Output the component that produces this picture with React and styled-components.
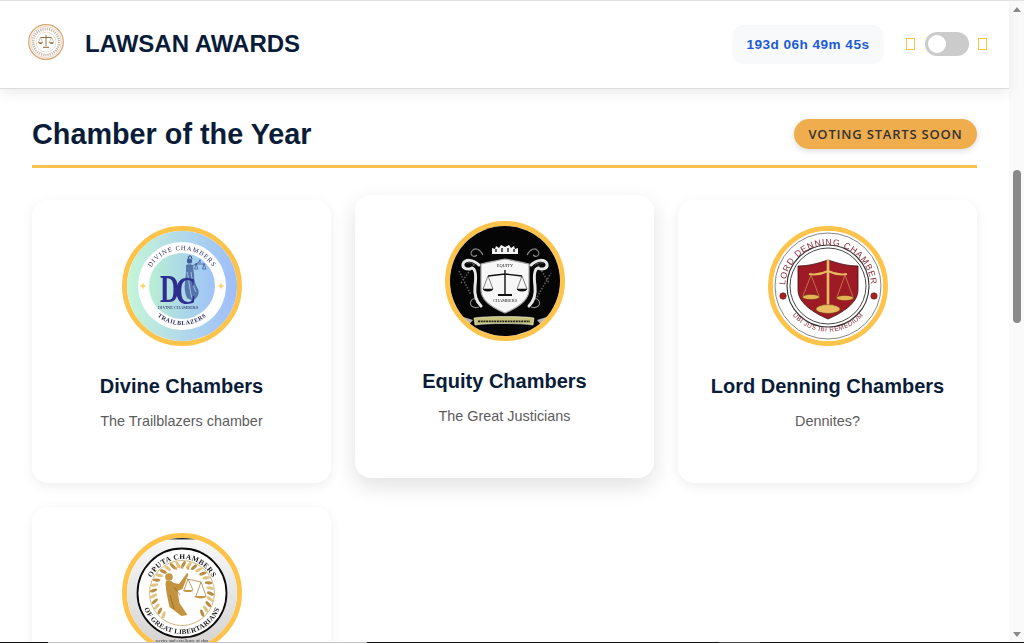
import React from "react";
import styled, { createGlobalStyle } from "styled-components";

const Global = createGlobalStyle`
  html, body { margin: 0; padding: 0; height: 100%; overflow: hidden; background: #fff; }
  body { font-family: "Liberation Sans", Arial, sans-serif; color: #0a1a33; }
  * { box-sizing: border-box; }
`;

const Frame = styled.div`
  position: relative;
  display: flex;
  width: 1024px;
  height: 643px;
  overflow: hidden;
  border-top: 1px solid #e2e2e2;
  background: #fff;
`;
const Page = styled.div`
  flex: 1;
  min-width: 0;
  display: flex;
  flex-direction: column;
`;
const Header = styled.header`
  position: relative;
  z-index: 2;
  height: 88px;
  flex: none;
  display: flex;
  align-items: center;
  padding: 0 22px 2px 28px;
  background: #fff;
  border-bottom: 1px solid #dcdcdc;
  box-shadow: 0 4px 12px rgba(0, 0, 0, 0.08);
`;
const Brand = styled.div`
  display: flex;
  align-items: center;
  gap: 21px;
  flex: 1;
`;
const SealWrap = styled.div`
  flex: none;
  height: 36px;
  margin-bottom: 3px;
  svg { display: block; filter: blur(0.4px); }
`;
const BrandName = styled.h1`
  margin: 0;
  font-size: 24px;
  font-weight: 700;
  color: #0a1c38;
`;
const Timer = styled.div`
  width: 152px;
  height: 39px;
  margin-top: 2px;
  display: flex;
  align-items: center;
  justify-content: center;
  border-radius: 12px;
  background: #f8f9fb;
  color: #1d5bd6;
  font-size: 13.6px;
  font-weight: 700;
  letter-spacing: 0.45px;
`;
const ThemeSwitch = styled.div`
  display: flex;
  align-items: center;
  gap: 10px;
  margin-left: 22px;
`;
const Tofu = styled.span`
  width: 9px;
  height: 12px;
  border: 1px solid #fdc43f;
`;
const Track = styled.div`
  width: 44px;
  height: 24px;
  margin-right: -1px;
  padding: 3px 0 0 3px;
  border-radius: 12px;
  background: #cbcbcb;
`;
const Knob = styled.div`
  width: 18px;
  height: 18px;
  border-radius: 50%;
  background: #fff;
`;
const Main = styled.main`
  flex: 1;
  min-height: 0;
  padding: 30px 32px 0;
`;
const SectionHead = styled.div`
  display: flex;
  align-items: center;
  justify-content: space-between;
  height: 49px;
  padding-bottom: 16px;
  border-bottom: 3px solid #fdc34a;
`;
const SectionTitle = styled.h2`
  margin: 0;
  font-size: 28.8px;
  font-weight: 700;
  color: #0a1c38;
`;
const Badge = styled.div`
  width: 183px;
  height: 30px;
  display: flex;
  align-items: center;
  justify-content: center;
  border-radius: 15px;
  background: #f0ad4e;
  color: #333;
  font-family: "Open Sans", sans-serif;
  font-size: 13px;
  font-weight: 600;
  letter-spacing: 0.8px;
  white-space: nowrap;
  box-shadow: 0 2px 6px rgba(0, 0, 0, 0.14);
`;
const Grid = styled.div`
  display: grid;
  grid-template-columns: repeat(3, 299px);
  grid-auto-rows: 283px;
  gap: 24px;
  margin-top: 32px;
`;
const Card = styled.article`
  display: flex;
  flex-direction: column;
  align-items: center;
  padding-top: 26px;
  border-radius: 16px;
  background: #fff;
  transform: ${(p) => (p.$raised ? "translateY(-5px)" : "none")};
  box-shadow: ${(p) =>
    p.$raised ? "0 8px 22px rgba(0,0,0,0.12)" : "0 3px 12px rgba(0,0,0,0.07)"};
`;
const Emblem = styled.div`
  width: 120px;
  height: 120px;
  flex: none;
  border-radius: 50%;
  border: 5px solid #fdc34a;
  overflow: hidden;
  svg { display: block; width: 100%; height: 100%; filter: blur(0.4px); }
`;
const CardName = styled.h3`
  margin: 28px 0 0;
  font-size: 20px;
  line-height: 24px;
  font-weight: 700;
  color: #0a1c38;
`;
const CardText = styled.p`
  margin: 15px 0 0;
  font-size: 14.4px;
  line-height: 17px;
  color: #5c5c5c;
`;
const Scrollbar = styled.div`
  width: 15px;
  flex: none;
  display: flex;
  flex-direction: column;
  align-items: center;
  background: #fafafa;
`;
const ArrowUp = styled.div`
  margin-top: 6px;
  border-left: 4.5px solid transparent;
  border-right: 4.5px solid transparent;
  border-bottom: 5px solid #8a8a8a;
`;
const Thumb = styled.div`
  width: 8px;
  height: 153px;
  margin-top: 158px;
  border-radius: 4px;
  background: #8a8a8a;
`;
const ArrowDown = styled.div`
  margin-top: auto;
  margin-bottom: 6px;
  border-left: 4.5px solid transparent;
  border-right: 4.5px solid transparent;
  border-top: 5px solid #8a8a8a;
`;
const Taskline = styled.div`
  position: absolute;
  z-index: 3;
  left: 0;
  right: 0;
  bottom: 0;
  height: 1px;
  background: #111;
`;
const TaskSegment = styled.div`
  position: absolute;
  left: ${(p) => p.$left}px;
  width: ${(p) => p.$width}px;
  height: 1px;
  background: ${(p) => p.$color};
`;

const serif = '"Liberation Serif", serif';
const sans = '"Liberation Sans", sans-serif';
const VB = "1 1 110 110";

function SmallSeal() {
  return (
    <svg width="36" height="36" viewBox="0 0 36 36">
      <circle cx="18" cy="18" r="17.3" fill="#fff" stroke="#d6a36c" strokeWidth="1.2" />
      <circle cx="18" cy="18" r="15.5" fill="none" stroke="#e6c9ab" strokeWidth="0.8" />
      <circle cx="18" cy="18" r="13" fill="none" stroke="#c4b8ab" strokeWidth="2.6" strokeDasharray="1.2 1" />
      <circle cx="18" cy="18" r="10" fill="#fff" stroke="#e0c8ae" strokeWidth="0.6" />
      <path d="M18 11v11M12.5 13.5h11" stroke="#8a6233" strokeWidth="0.9" fill="none" />
      <path d="M12.5 13.5l-2.2 5h4.4zM23.5 13.5l-2.2 5h4.4z" stroke="#a5835c" strokeWidth="0.5" fill="none" />
      <path d="M10.3 18.5a2.2 1.4 0 0 0 4.4 0zM21.3 18.5a2.2 1.4 0 0 0 4.4 0zM15 22.8h6v1h-6z" fill="#8a6233" />
    </svg>
  );
}

function DivineLogo() {
  return (
    <svg viewBox={VB}>
      <defs>
        <linearGradient id="dv" x1="0" x2="1" y1="0" y2="0">
          <stop offset="0" stopColor="#c6f6d8" />
          <stop offset="1" stopColor="#9dbdfb" />
        </linearGradient>
        <linearGradient id="dv2" x1="0" x2="1" y1="0" y2="0">
          <stop offset="0" stopColor="#b9efd4" />
          <stop offset="1" stopColor="#9fc2f8" />
        </linearGradient>
        <path id="dvTop" d="M20 56a36 36 0 0 1 72 0" />
        <path id="dvBot" d="M17 56a39 39 0 0 0 78 0" />
      </defs>
      <rect width="112" height="112" fill="url(#dv)" />
      <circle cx="56" cy="56" r="44" fill="#fff" />
      <circle cx="56" cy="56" r="33" fill="url(#dv2)" />
      <text fontFamily={serif} fontSize="6.6" fill="#2c2c5e" letterSpacing="0.9">
        <textPath href="#dvTop" startOffset="50%" textAnchor="middle">DIVINE CHAMBERS</textPath>
      </text>
      <text fontFamily={serif} fontSize="6" fontWeight="700" fill="#2c2c5e" letterSpacing="0.5">
        <textPath href="#dvBot" startOffset="50%" textAnchor="middle">TRAILBLAZERS</textPath>
      </text>
      <path d="M17 52.500l1 2.500 2.500 1-2.500 1-1 2.500-1-2.500-2.500-1 2.500-1zM95 52.500l1 2.500 2.500 1-2.500 1-1 2.500-1-2.500-2.500-1 2.500-1z" fill="#f6d468" />
      <g fill="none" stroke="#2f4a8c" strokeLinecap="round">
        <circle cx="63.5" cy="31" r="2.6" fill="#3f5c9c" stroke="none" />
        <path d="M62 29l1-3 2 0 1 3" strokeWidth="1" />
        <path d="M66 36l6-3 2-3M74 30v3M70 34h8M70 34l-1.500 5h3zM78 34l-1.500 5h3z" strokeWidth="0.7" />
      </g>
      <path d="M60 35c3-1 6-1 7 1l1 8c0 6 1 10 4 15 2 5-1 9-5 12l-6-3c-2-5-3-10-2-16l1-9z" fill="#3f5c9c" opacity="0.8" />
      <path d="M61 42c2 6 2 16 5 26M65 42c1 8 2 14 5 20" stroke="#c6dcf8" strokeWidth="0.7" fill="none" />
      <text transform="translate(34 72) scale(0.66 1)" fontFamily={serif} fontSize="40" fontWeight="700" fill="#2e2e8e">D</text>
      <text transform="translate(49 74) scale(0.74 1)" fontFamily={serif} fontSize="40" fontWeight="700" fill="#2e2e8e">C</text>
      <text x="52" y="78.500" textAnchor="middle" fontFamily={serif} fontSize="4.400" fill="#23235f">DIVINE CHAMBERS</text>
    </svg>
  );
}

function EquityLogo() {
  return (
    <svg viewBox={VB}>
      <rect width="112" height="112" fill="#050505" />
      <path d="M12 58l14-20M10 46l12 24M88 72l14-24M88 38l12 20" stroke="#5c5c5c" strokeWidth="1.6" strokeDasharray="1.5 1.5" fill="none" />
      <g fill="none" stroke="#8a8a8a" strokeWidth="1.1">
        <path d="M34 30c-3-6-8-8-11-4s2 7 5 4M78 30c3-6 8-8 11-4s-2 7-5 4" />
        <path d="M30 82c-6 2-10-2-8-6s7-2 6 2M82 82c6 2 10-2 8-6s-7-2-6 2" />
      </g>
      <g fill="none" stroke="#e8e8e8" strokeLinecap="round">
        <path d="M30 40c-6-6-14-6-16-1-1 5 5 6 9 4 4 1 4 10 3 18-1 9 2 16 6 20" strokeWidth="3" />
        <path d="M82 40c6-6 14-6 16-1 1 5-5 6-9 4-4 1-4 10-3 18 1 9-2 16-6 20" strokeWidth="3" />
        <path d="M18 38c3-1 6 0 8 2M94 38c-3-1-6 0-8 2" stroke="#555" strokeWidth="1" />
      </g>
      <path d="M43 29v-6l3 1 1-3 3 2 2-3 4 2 4-2 2 3 3-2 1 3 3-1v6z" fill="#f2f2f2" />
      <path d="M47 24v3M53 23v4M59 23v4M65 24v3" stroke="#111" strokeWidth="1.3" />
      <path d="M32 39c10-2 17-4 24-5 7 1 14 3 24 5v26c0 10-12 18-24 23-12-5-24-13-24-23z" fill="#f7f7f7" stroke="#a8a8a8" strokeWidth="1.2" />
      <text x="56" y="42" textAnchor="middle" fontFamily={serif} fontSize="4.400" fill="#222">EQUITY</text>
      <text x="56" y="77" textAnchor="middle" fontFamily={serif} fontSize="4.400" fill="#222">CHAMBERS</text>
      <path d="M56 45v24M39 51l17-2 17 2" stroke="#111" strokeWidth="1.4" fill="none" />
      <path d="M39 51l-5 13h10zM73 51l-5 13h10z" stroke="#333" strokeWidth="0.6" fill="none" />
      <path d="M34 64a5 2.400 0 0 0 10 0zM68 64a5 2.400 0 0 0 10 0zM49 69h14v2H49z" fill="#111" />
      <path d="M25 93c12-2 50-2 60 0l-1 7c-12-2-46-2-58 0z" fill="#c8c47a" stroke="#eee" strokeWidth="0.6" />
      <path d="M29 96.400h52" stroke="#222" strokeWidth="1.8" strokeDasharray="2 0.7" fill="none" />
      <path d="M8 90l16 5-7 8zM104 90l-16 5 7 8z" fill="#b5b5b5" />
    </svg>
  );
}

function DenningLogo() {
  return (
    <svg viewBox={VB}>
      <defs>
        <path id="ldTop" d="M13 58a43 43 0 1 1 86 0" />
        <path id="ldBot" d="M10 62a46.500 46.500 0 0 0 92 0" />
      </defs>
      <rect width="112" height="112" fill="#fff" />
      <circle cx="56" cy="56" r="53" fill="none" stroke="#666" strokeWidth="0.8" />
      <circle cx="56" cy="56" r="41" fill="none" stroke="#333" strokeWidth="1.100" />
      <circle cx="56" cy="56" r="38" fill="none" stroke="#333" strokeWidth="0.9" />
      <text fontFamily={sans} fontSize="8.800" fill="#8e2a3a" letterSpacing="0.75">
        <textPath href="#ldTop" startOffset="50%" textAnchor="middle">LORD DENNING CHAMBER</textPath>
      </text>
      <text fontFamily={sans} fontSize="6.400" fill="#8e2a3a" letterSpacing="0.5">
        <textPath href="#ldBot" startOffset="50%" textAnchor="middle">UBI JUS IBI REMEDIUM</textPath>
      </text>
      <circle cx="11" cy="66" r="3.200" fill="#a8211f" stroke="#5a2020" strokeWidth="0.6" />
      <circle cx="102" cy="66" r="3.200" fill="#a8211f" stroke="#5a2020" strokeWidth="0.6" />
      <path d="M26 36c11 0 21-3 30-6 9 3 19 6 30 6v24c0 13-16 23-30 29-14-6-30-16-30-29z" fill="#9e1a24" stroke="#3e1014" strokeWidth="0.8" />
      <path d="M37 44c6 1 13 0 19-3 6 3 13 4 19 3" stroke="#e7b75e" strokeWidth="2" fill="none" />
      <path d="M56 30v49" stroke="#e6bb66" strokeWidth="2.600" />
      <path d="M39 45l-8 21M39 45l8 21M73 45l-8 22M73 45l8 22" stroke="#d2aa62" strokeWidth="0.6" fill="none" />
      <ellipse cx="39" cy="67" rx="8.500" ry="2.600" fill="#e4b355" stroke="#5e3e0e" strokeWidth="0.5" />
      <ellipse cx="73" cy="68" rx="8.500" ry="2.600" fill="#e4b355" stroke="#5e3e0e" strokeWidth="0.5" />
      <ellipse cx="56" cy="79" rx="12" ry="4.400" fill="#e9bd60" stroke="#5e3e0e" strokeWidth="0.5" />
    </svg>
  );
}

function OputaLogo() {
  const leaves = [];
  for (let a = 40; a <= 320; a += 11) {
    leaves.push(
      <ellipse
        key={a}
        cx="56"
        cy="27.500"
        rx="1.600"
        ry="3.800"
        fill={(a - 40) % 22 ? "#b98d42" : "#e1c47f"}
        transform={`rotate(${a + 180} 56 56) rotate(${a < 180 ? -24 : 24} 56 27.5)`}
      />
    );
  }
  return (
    <svg viewBox={VB}>
      <defs>
        <linearGradient id="op" x1="0" x2="0" y1="0" y2="1">
          <stop offset="0" stopColor="#f8f8f8" />
          <stop offset="0.5" stopColor="#e6e6e6" />
          <stop offset="1" stopColor="#d5d2d0" />
        </linearGradient>
        <path id="opTop" d="M22 56a34 34 0 0 1 68 0" />
        <path id="opBot" d="M15 56a41 41 0 0 0 82 0" />
      </defs>
      <rect width="112" height="112" fill="url(#op)" />
      <rect y="1" x="42" width="28" height="1.400" fill="#222" />
      <circle cx="56" cy="56" r="44.500" fill="#fff" stroke="#0a0a0a" strokeWidth="1.800" />
      {leaves}
      <circle cx="56" cy="56" r="32.500" fill="none" stroke="#c9a45e" strokeWidth="0.8" />
      <text fontFamily={serif} fontSize="7.400" fontWeight="700" fill="#1a1a1a" letterSpacing="0.4">
        <textPath href="#opTop" startOffset="50%" textAnchor="middle">OPUTA CHAMBERS</textPath>
      </text>
      <text fontFamily={serif} fontSize="7" fontWeight="700" fill="#1a1a1a" letterSpacing="0.3">
        <textPath href="#opBot" startOffset="50%" textAnchor="middle">OF GREAT LIBERTARIANS</textPath>
      </text>
      <path d="M50 29l.6 1.600h1.600l-1.300 1 .5 1.600-1.400-1-1.400 1 .5-1.600-1.300-1h1.600zM56 28l.6 1.600h1.600l-1.300 1 .5 1.600-1.400-1-1.400 1 .5-1.600-1.300-1h1.600zM62 29l.6 1.600h1.600l-1.300 1 .5 1.600-1.400-1-1.400 1 .5-1.600-1.300-1h1.600z" fill="#c9a45e" />
      <circle cx="43" cy="40" r="3.800" fill="#c69645" />
      <path d="M40 44c3-1 6 0 8 2l5 1 8-11 1.500 1-6 15-5 2 2 12 8 12-6 1-12-9-3-14-1-9z" fill="#c39340" />
      <path d="M48 50l6 8M44 58l4 14" stroke="#8a6526" strokeWidth="0.7" fill="none" />
      <path d="M61 42l14 3M62 42l-4 11M62 42l5 11M75 45l-5 14M75 45l5 14" stroke="#a98540" strokeWidth="0.8" fill="none" />
      <path d="M57 53a5 2 0 0 0 10 0zM68.500 59a6 2.400 0 0 0 12 0z" fill="#c19745" />
      <text x="56" y="105" textAnchor="middle" fontFamily={serif} fontSize="4.400" fill="#222">service and excellence of char</text>
    </svg>
  );
}

const chambers = [
  { name: "Divine Chambers", text: "The Trailblazers chamber", Logo: DivineLogo },
  { name: "Equity Chambers", text: "The Great Justicians", Logo: EquityLogo, raised: true },
  { name: "Lord Denning Chambers", text: "Dennites?", Logo: DenningLogo },
  { name: "Oputa Chambers", text: "The Great Libertarians", Logo: OputaLogo },
];

export default function App() {
  return (
    <Frame>
      <Global />
      <Page>
        <Header>
          <Brand>
            <SealWrap><SmallSeal /></SealWrap>
            <BrandName>LAWSAN AWARDS</BrandName>
          </Brand>
          <Timer>193d 06h 49m 45s</Timer>
          <ThemeSwitch>
            <Tofu />
            <Track><Knob /></Track>
            <Tofu />
          </ThemeSwitch>
        </Header>
        <Main>
          <SectionHead>
            <SectionTitle>Chamber of the Year</SectionTitle>
            <Badge>VOTING STARTS SOON</Badge>
          </SectionHead>
          <Grid>
            {chambers.map(({ name, text, Logo, raised }) => (
              <Card key={name} $raised={raised}>
                <Emblem><Logo /></Emblem>
                <CardName>{name}</CardName>
                <CardText>{text}</CardText>
              </Card>
            ))}
          </Grid>
        </Main>
      </Page>
      <Scrollbar>
        <ArrowUp />
        <Thumb />
        <ArrowDown />
      </Scrollbar>
      <Taskline>
        <TaskSegment $left={48} $width={319} $color="#c4c4c4" />
        <TaskSegment $left={719} $width={41} $color="#444" />
      </Taskline>
    </Frame>
  );
}
